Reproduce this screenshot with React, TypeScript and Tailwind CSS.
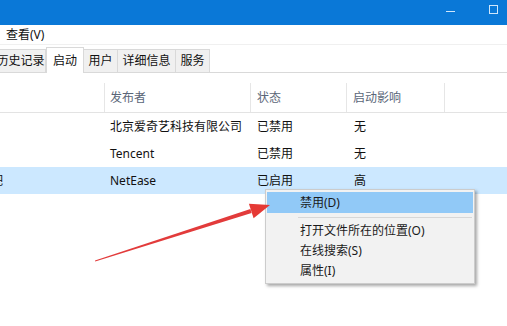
import React from "react";

const font = { fontFamily: '"Noto Sans", "Noto Sans CJK SC", sans-serif' };

const tabs = [
  { label: "历史记录", active: false, w: "w-[50px]", ml: "-ml-[4px]" },
  { label: "启动", active: true, w: "w-[38px]", ml: "" },
  { label: "用户", active: false, w: "w-[34px]", ml: "" },
  { label: "详细信息", active: false, w: "w-[58px]", ml: "" },
  { label: "服务", active: false, w: "w-[34px]", ml: "" },
];

const rows = [
  { name: "", publisher: "北京爱奇艺科技有限公司", status: "已禁用", impact: "无", selected: false },
  { name: "", publisher: "Tencent", status: "已禁用", impact: "无", selected: false },
  { name: "吧", publisher: "NetEase", status: "已启用", impact: "高", selected: true },
];

function Arrow() {
  // tapered red annotation arrow pointing at the menu
  return (
    <svg className="absolute left-0 top-0 pointer-events-none" width="507" height="326">
      <polygon
        points="95,260.6 95.2,261.5 251.6,212.9 250.4,209.1"
        fill="#e23b3b"
      />
      <polygon points="270,205 248.9,203.8 253.6,218.2" fill="#e53935" />
    </svg>
  );
}

function ContextMenu() {
  return (
    <div className="absolute left-[265px] top-[189px] w-[210px] bg-[#f2f2f2] border border-[#cccccc] shadow-[2px_2px_3px_rgba(0,0,0,0.35)] py-[2px] text-[12px] text-[#1a1a1a]">
      <div className="mx-[1px] h-[21px] bg-[#91c9f7] flex items-center pl-[33px]">禁用(D)</div>
      <div className="h-[8px] flex items-center ml-[32px] mr-[2px]">
        <div className="h-px w-full bg-[#d7d7d7]" />
      </div>
      <div className="h-[20px] flex items-center pl-[34px]">打开文件所在的位置(O)</div>
      <div className="h-[20px] flex items-center pl-[34px]">在线搜索(S)</div>
      <div className="h-[20px] flex items-center pl-[34px]">属性(I)</div>
    </div>
  );
}

export default function App() {
  return (
    <div className="relative w-[507px] h-[326px] overflow-hidden bg-white flex flex-col" style={font}>
      {/* title bar */}
      <div className="h-[25px] bg-[#0a78d7] flex items-center justify-end shrink-0">
        <div className="w-[9px] h-px bg-[#cfe6fb] mr-[34px] mt-[-2px]" />
        <div className="w-[9px] h-[9px] border border-[#cfe6fb] mr-[9px] mt-[-6px]" />
      </div>

      {/* menu bar */}
      <div className="h-[19px] flex items-center pl-[6px] text-[12px] text-[#111] shrink-0">查看(V)</div>
      <div className="h-px bg-[#f0f0f0] shrink-0" />

      {/* tabs */}
      <div className="h-[28px] flex items-end border-b border-[#d9d9d9] text-[12px] text-[#111] shrink-0">
        {tabs.map((t) =>
          t.active ? (
            <div
              key={t.label}
              className={`${t.w} h-[26px] -mb-px bg-white border border-b-0 border-[#d9d9d9] flex items-center justify-center whitespace-nowrap`}
            >
              {t.label}
            </div>
          ) : (
            <div
              key={t.label}
              className={`${t.w} ${t.ml} h-[23px] bg-[#f0f0f0] border border-b-0 border-l-0 border-[#d9d9d9] flex items-center justify-center whitespace-nowrap overflow-hidden`}
            >
              {t.label}
            </div>
          )
        )}
      </div>

      {/* column headers */}
      <div className="mt-[10px] h-[30px] flex border-b border-[#e3e3e3] text-[12px] text-[#5a6678] shrink-0">
        <div className="w-[105px] border-r border-[#e6e6e6]" />
        <div className="w-[146px] border-r border-[#e6e6e6] flex items-center pl-[5px]">发布者</div>
        <div className="w-[96px] border-r border-[#e6e6e6] flex items-center pl-[6px]">状态</div>
        <div className="w-[98px] border-r border-[#e6e6e6] flex items-center pl-[6px]">启动影响</div>
        <div className="flex-1" />
      </div>

      {/* rows */}
      <div className="flex flex-col text-[12px] text-[#111] shrink-0">
        {rows.map((r, i) => (
          <div
            key={i}
            className={`h-[27px] flex items-center ${r.selected ? "bg-[#cce8ff]" : ""}`}
          >
            <div className="w-[105px] overflow-hidden">
              {r.name && <span className="block -ml-[9px]">{r.name}</span>}
            </div>
            <div className="w-[146px] pl-[5px]">{r.publisher}</div>
            <div className="w-[96px] pl-[6px]">{r.status}</div>
            <div className="w-[98px] pl-[7px]">{r.impact}</div>
          </div>
        ))}
      </div>

      <ContextMenu />
      <Arrow />
    </div>
  );
}
